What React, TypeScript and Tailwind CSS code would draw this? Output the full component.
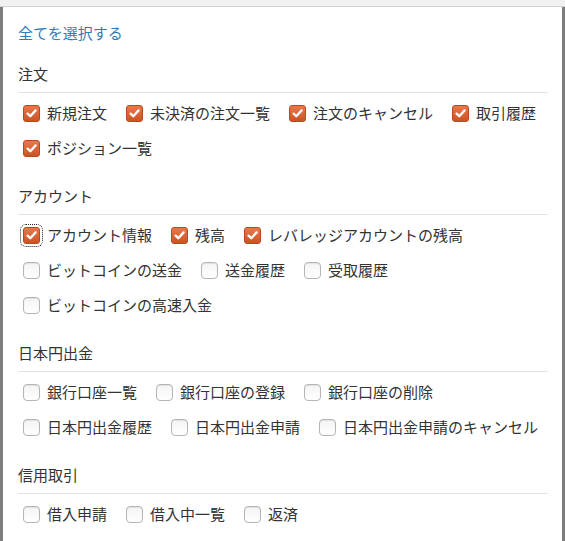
import React from "react";

type Item = { label: string; checked?: boolean; focus?: boolean };
type Section = { title: string; items: Item[] };

const sections: Section[] = [
  {
    title: "注文",
    items: [
      { label: "新規注文", checked: true },
      { label: "未決済の注文一覧", checked: true },
      { label: "注文のキャンセル", checked: true },
      { label: "取引履歴", checked: true },
      { label: "ポジション一覧", checked: true },
    ],
  },
  {
    title: "アカウント",
    items: [
      { label: "アカウント情報", checked: true, focus: true },
      { label: "残高", checked: true },
      { label: "レバレッジアカウントの残高", checked: true },
      { label: "ビットコインの送金" },
      { label: "送金履歴" },
      { label: "受取履歴" },
      { label: "ビットコインの高速入金" },
    ],
  },
  {
    title: "日本円出金",
    items: [
      { label: "銀行口座一覧" },
      { label: "銀行口座の登録" },
      { label: "銀行口座の削除" },
      { label: "日本円出金履歴" },
      { label: "日本円出金申請" },
      { label: "日本円出金申請のキャンセル" },
    ],
  },
  {
    title: "信用取引",
    items: [
      { label: "借入申請" },
      { label: "借入中一覧" },
      { label: "返済" },
    ],
  },
];

function Box({ checked, focus }: { checked?: boolean; focus?: boolean }) {
  if (checked) {
    return (
      <span
        className={
          "flex h-[17px] w-[17px] shrink-0 items-center justify-center rounded-[3px] border border-[#b9491c] bg-gradient-to-b from-[#e8784a] to-[#cc5323] " +
          (focus ? "outline outline-1 outline-dotted outline-[#222] outline-offset-[2px]" : "")
        }
      >
        <svg width="13" height="13" viewBox="0 0 13 13">
          <path
            d="M2.6 6.6 L5.3 9.2 L10.6 3.4"
            fill="none"
            stroke="#ffffff"
            strokeWidth="2.3"
            strokeLinecap="round"
            strokeLinejoin="round"
          />
        </svg>
      </span>
    );
  }
  return (
    <span className="h-[17px] w-[17px] shrink-0 rounded-[4px] border border-[#b5b5b5] bg-gradient-to-b from-[#f4f4f4] to-[#ffffff] shadow-[inset_0_1px_1px_rgba(0,0,0,0.08)]" />
  );
}

export default function App() {
  return (
    <div
      className="flex h-[541px] w-[565px] flex-col bg-[#f1f1f1] text-[#333]"
      style={{ fontFamily: '"Noto Sans CJK JP", "Noto Sans", sans-serif' }}
    >
      <div className="h-[7px] shrink-0 border-b border-[#d4d4d4] bg-[#f1f1f1]" />
      <div className="flex min-h-0 flex-1">
        <div className="w-[3px] shrink-0 bg-[#7d7d7d]" />
        <div className="flex-1 overflow-hidden bg-white pl-[15px] pr-[14px] pt-[16px]">
          <div className="text-[15px] leading-[20px] text-[#2f7bb8]">全てを選択する</div>
          <div className="mt-[21px] flex flex-col gap-[28px]">
            {sections.map((s) => (
              <div key={s.title}>
                <div className="text-[15px] leading-[20px] text-[#333]">{s.title}</div>
                <div className="mt-[8px] border-t border-[#e3e3e3]" />
                <div className="mt-[10px] flex flex-wrap gap-x-[19px] gap-y-[15px] pl-[5px]">
                  {s.items.map((it) => (
                    <div key={it.label} className="flex h-[20px] items-center gap-[7px]">
                      <Box checked={it.checked} focus={it.focus} />
                      <span className="whitespace-nowrap text-[15px] leading-[20px] text-[#333]">
                        {it.label}
                      </span>
                    </div>
                  ))}
                </div>
              </div>
            ))}
          </div>
        </div>
        <div className="w-[3px] shrink-0 bg-[#7d7d7d]" />
      </div>
    </div>
  );
}
